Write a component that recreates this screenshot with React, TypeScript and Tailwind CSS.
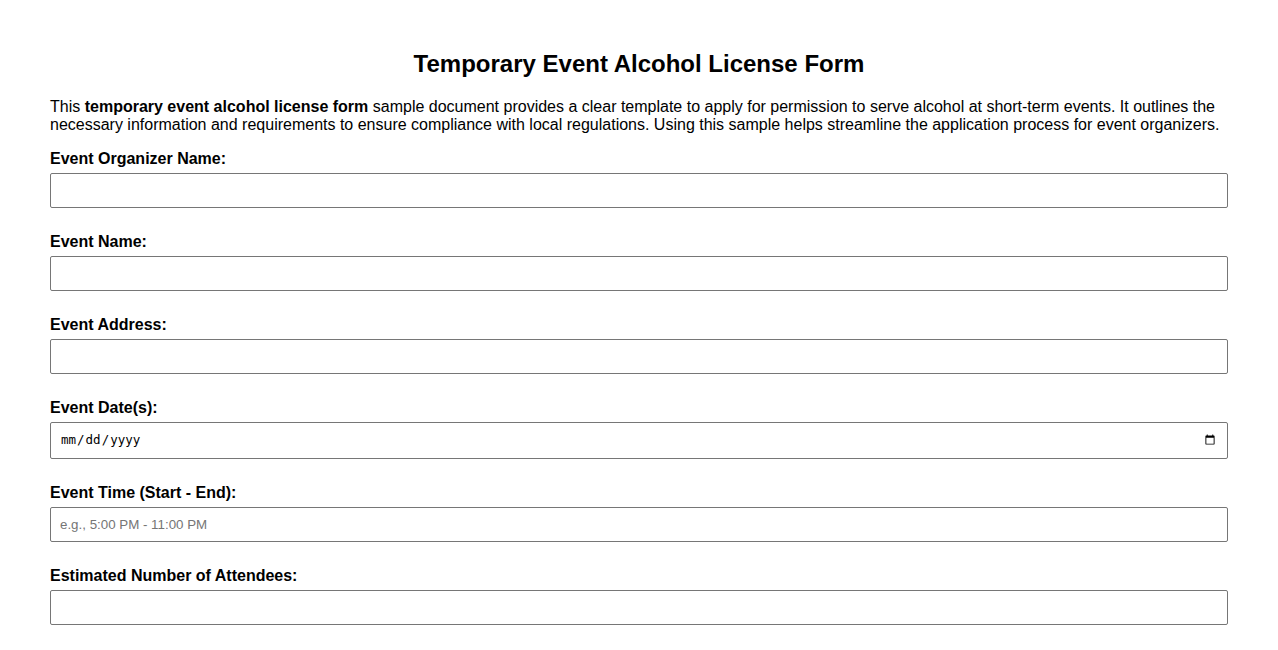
export default function App() {
  const fields = [
    { label: 'Event Organizer Name:', type: 'text' },
    { label: 'Event Name:', type: 'text' },
    { label: 'Event Address:', type: 'text' },
    { label: 'Event Date(s):', type: 'date' },
    { label: 'Event Time (Start - End):', type: 'text', placeholder: 'e.g., 5:00 PM - 11:00 PM' },
    { label: 'Estimated Number of Attendees:', type: 'text' },
  ]

  return (
    <div className="min-h-screen bg-white px-[50px] pt-[50px] pb-10 text-black font-['Liberation_Sans',Arial,sans-serif]">
      <h1 className="text-center text-[24px] leading-[28px] font-bold">
        Temporary Event Alcohol License Form
      </h1>
      <p className="mt-[20px] mb-[15px] text-[16px] leading-[18px]">
        This <strong>temporary event alcohol license form</strong> sample document provides a clear template to apply for permission to serve alcohol at short-term events. It outlines the necessary information and requirements to ensure compliance with local regulations. Using this sample helps streamline the application process for event organizers.
      </p>
      <form>
        {fields.map((f, i) => (
          <div key={i} className="mb-[24px]">
            <label className="block mb-[5px] text-[16px] leading-[19px] font-bold">{f.label}</label>
            <input
              type={f.type}
              placeholder={f.placeholder}
              className={
                f.type === 'date'
                  ? "block w-full h-[37px] border border-[#767676] rounded-[2px] px-[9px] text-[12.5px] font-['DejaVu_Sans_Mono',monospace]"
                  : 'block w-full h-[35px] border border-[#767676] rounded-[2px] px-[9px] text-[13.33px] placeholder:text-[#757575]'
              }
            />
          </div>
        ))}
      </form>
    </div>
  )
}
